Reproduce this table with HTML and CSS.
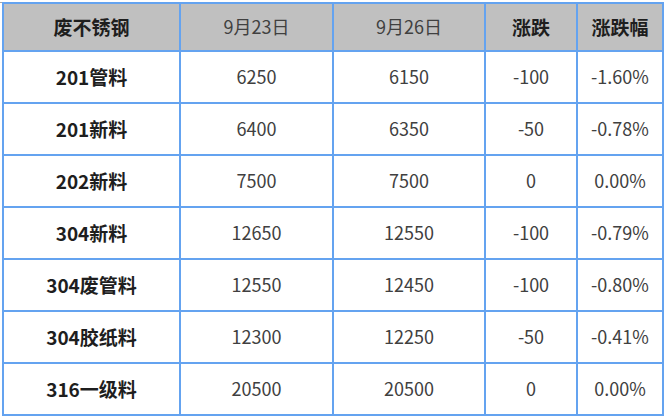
FILE: index.html
```html
<!DOCTYPE html>
<html lang="zh">
<head>
<meta charset="utf-8">
<link rel="stylesheet" href="styles.css">
</head>
<body>
<div class="wrap">
<table class="price">
<colgroup><col class="c1"><col class="c2"><col class="c3"><col class="c4"><col class="c5"></colgroup>
<thead>
<tr><th class="b">废不锈钢</th><th>9月23日</th><th>9月26日</th><th class="b">涨跌</th><th class="b">涨跌幅</th></tr>
</thead>
<tbody>
<tr><td class="name">201管料</td><td>6250</td><td>6150</td><td>-100</td><td>-1.60%</td></tr>
<tr><td class="name">201新料</td><td>6400</td><td>6350</td><td>-50</td><td>-0.78%</td></tr>
<tr><td class="name">202新料</td><td>7500</td><td>7500</td><td>0</td><td>0.00%</td></tr>
<tr><td class="name">304新料</td><td>12650</td><td>12550</td><td>-100</td><td>-0.79%</td></tr>
<tr><td class="name">304废管料</td><td>12550</td><td>12450</td><td>-100</td><td>-0.80%</td></tr>
<tr><td class="name">304胶纸料</td><td>12300</td><td>12250</td><td>-50</td><td>-0.41%</td></tr>
<tr><td class="name">316一级料</td><td>20500</td><td>20500</td><td>0</td><td>0.00%</td></tr>
</tbody>
</table>
</div>
</body>
</html>
```
FILE: styles.css
```css
html, body { margin: 0; padding: 0; background: #fff; }
body { font-family: "Noto Sans CJK SC", "Noto Sans", sans-serif; }
.wrap { margin-top: 2px; border-top: 1px solid #a8a8a8; padding-left: 2px; }
.price { border-collapse: collapse; table-layout: fixed; width: 660px; margin-top: -1px; }
.c1 { width: 177px; } .c2 { width: 153px; } .c3 { width: 152px; } .c4 { width: 92px; } .c5 { width: 86px; }
.price th, .price td { border: 2px solid #64a3f0; text-align: center; padding: 0; font-size: 18px; color: #404040; line-height: 1.2; }
.price th { background: #c0c0c0; height: 46px; font-weight: normal; }
.price th.b { font-weight: bold; color: #1e1e1e; font-size: 19px; }
.price td { height: 50px; }
.price td.name { font-weight: bold; color: #1e1e1e; font-size: 19px; }
```
